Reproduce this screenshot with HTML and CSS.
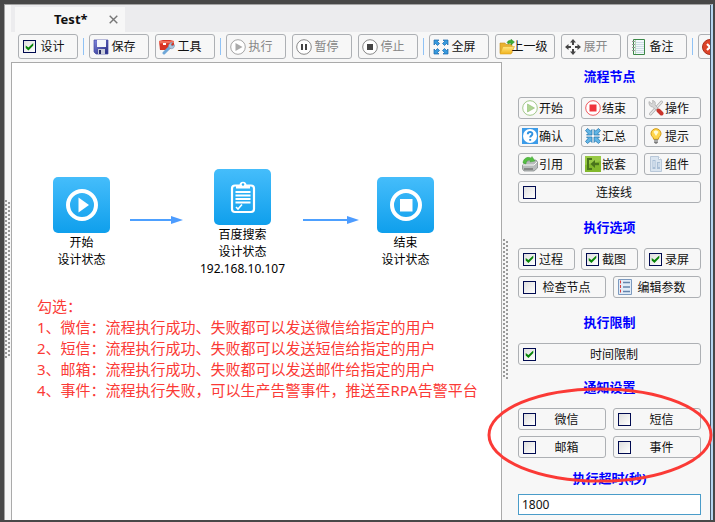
FILE: index.html
```html
<!DOCTYPE html>
<html lang="zh-CN">
<head>
<meta charset="utf-8">
<title>Test*</title>
<link rel="stylesheet" href="styles.css">
</head>
<body>
<svg class="defs" aria-hidden="true">
  <defs>
    <linearGradient id="blue" x1="0" y1="0" x2="0" y2="1"><stop offset="0" stop-color="#45bdfb"/><stop offset="1" stop-color="#0f9fec"/></linearGradient>
    <linearGradient id="disk" x1="0" y1="0" x2="1" y2="1"><stop offset="0" stop-color="#7f86dd"/><stop offset="1" stop-color="#23277f"/></linearGradient>
    <linearGradient id="gold" x1="0" y1="0" x2="0" y2="1"><stop offset="0" stop-color="#ffe882"/><stop offset="1" stop-color="#f2b31c"/></linearGradient>
  </defs>
</svg>
<div class="window">
  <div class="splitter splitter-left"><div class="grip"></div></div>
  <div class="workspace">
    <header class="tabs">
      <div class="tab"><span class="tab-title">Test*</span>
        <button class="tab-close" type="button" aria-label="关闭"><svg viewBox="0 0 9 9" width="9" height="9"><path d="M.7.7l7.6 7.6M8.3.7L.7 8.3" stroke="#777" stroke-width="1.4"/></svg></button>
      </div>
    </header>
    <nav class="toolbar">
      <div class="group">
        <label class="btn"><input type="checkbox" checked><span>设计</span></label>
      </div>
      <i class="sep"></i>
      <div class="group">
        <button class="btn" type="button"><svg class="icon" viewBox="0 0 16 16"><path d="M1 1h14v14H3l-2-2z" fill="url(#disk)" stroke="#4349a4" stroke-width=".7"/><path d="M4 1h9v7H4z" fill="#f4f6fb"/><path d="M5 10h7v5H5z" fill="#c9cdda"/><path d="M6 11h2v4H6z" fill="#272b66"/></svg><span>保存</span></button>
        <button class="btn" type="button"><svg class="icon" viewBox="0 0 16 16"><path d="M0 2l4-1h7l4 1v6l-6 3H1z" fill="#d93424"/><path d="M0 2l15 0v2L.5 4.500z" fill="#f0705c"/><path d="M4 4h3v2H4z" fill="#fff"/><path d="M5 14l6-6" stroke="#6ea7d8" stroke-width="3" stroke-linecap="round"/><path d="M13.500 3.500l-1.500 2 1 1.500 2.500-1.300c.5 2-1 4-3 4l-2-.5-1-2c0-2 2-4 4-3.700z" fill="#a8c6df" stroke="#7190aa" stroke-width=".5"/></svg><span>工具</span></button>
      </div>
      <i class="sep"></i>
      <div class="group">
        <button class="btn" type="button" disabled><svg class="icon" viewBox="0 0 16 16"><circle cx="8" cy="8" r="7.300" fill="#fff" stroke="#a5a5a5"/><path d="M5.500 4l7 4-7 4z" fill="#aaa"/></svg><span>执行</span></button>
        <button class="btn" type="button" disabled><svg class="icon" viewBox="0 0 16 16"><circle cx="8" cy="8" r="7.300" fill="#fff" stroke="#888"/><path d="M5 5h2v6H5zM9 5h2v6H9z" fill="#444"/></svg><span>暂停</span></button>
        <button class="btn" type="button" disabled><svg class="icon" viewBox="0 0 16 16"><circle cx="8" cy="8" r="7.300" fill="#fff" stroke="#888"/><path d="M5 5h6v6H5z" fill="#444"/></svg><span>停止</span></button>
      </div>
      <i class="sep"></i>
      <div class="group">
        <button class="btn" type="button"><svg class="icon" viewBox="0 0 16 16"><path d="M1 1h5L4.500 2.500l2 2-2 2-2-2L1 6zM15 1v5l-1.500-1.500-2 2-2-2 2-2L10 1zM1 15v-5l1.500 1.500 2-2 2 2-2 2L6 15zM15 15h-5l1.500-1.500-2-2 2-2 2 2L15 10z" fill="#369ade" stroke="#1765ab" stroke-width=".7"/></svg><span>全屏</span></button>
        <button class="btn" type="button"><svg class="icon" viewBox="0 0 16 16"><path d="M1 4h5l1 1.500h6V14H1z" fill="#e9b22f" stroke="#c48d1b" stroke-width=".6"/><path d="M4 7.500h11.500L12 15H1z" fill="url(#gold)" stroke="#dba626" stroke-width=".6"/><path d="M8 3.500C9 1.500 11 1 12 1.500V.2L15.500 3 12 6V4.300c-1-.3-2 0-2.700.7z" fill="#3eac35" stroke="#1f7d20" stroke-width=".4"/></svg><span>上一级</span></button>
        <button class="btn" type="button" disabled><svg class="icon" viewBox="0 0 16 16"><path d="M8 0l3 3.500H9V6H7V3.500H5zM8 16l-3-3.500h2V10h2v2.500h2zM0 8l3.500-3v2H6v2H3.500v2zM16 8l-3.500 3V9H10V7h2.500V5z" fill="#444"/></svg><span>展开</span></button>
        <button class="btn" type="button"><svg class="icon" viewBox="0 0 16 16"><path d="M2.500.5h11v15h-11z" fill="#f3f8fb" stroke="#3a8746"/><path d="M5 3.500h8M5 5.500h8M5 7.500h8M5 9.500h8M5 11.500h8M5 13.500h8" stroke="#c3d5de" stroke-width=".8"/><path d="M4.500 1v14" stroke="#b7d9ba"/><path d="M1 2.500h3M1 5.500h3M1 8.500h3M1 11.500h3" stroke="#999"/></svg><span>备注</span></button>
      </div>
      <i class="sep"></i>
      <div class="group">
        <button class="btn" type="button" aria-label="关闭流程"><svg class="icon" viewBox="0 0 16 16"><circle cx="8" cy="8" r="7.500" fill="#dc4328" stroke="#a92f1c"/><path d="M5 5l6 6M11 5l-6 6" stroke="#fff" stroke-width="2.200"/></svg></button>
      </div>
    </nav>
    <div class="content">
      <main class="canvas">
        <div class="node node-start">
          <svg class="tile" viewBox="0 0 57 56"><rect width="57" height="56" rx="5" fill="url(#blue)"/><circle cx="29" cy="28" r="14" fill="none" stroke="#fff" stroke-width="4"/><path d="M25.500 20.500v15L36 28z" fill="#fff"/></svg>
          <p>开始</p><p>设计状态</p>
        </div>
        <svg class="arrow arrow-one" viewBox="0 0 54 8"><path d="M0 4h44" stroke="#4da0ff" stroke-width="2"/><path d="M41 0l12 4-12 4z" fill="#4d9cff"/></svg>
        <div class="node node-search">
          <svg class="tile" viewBox="0 0 57 56"><rect width="57" height="56" rx="5" fill="url(#blue)"/><rect x="18" y="16.500" width="22" height="26.500" rx="3" fill="none" stroke="#fff" stroke-width="2.200"/><path d="M22 19.500v-3.300h3.500a3.500 3.500 0 0 1 7 0H36v3.300z" fill="#fff"/><circle cx="29" cy="15.500" r="1.200" fill="#27adf3"/><path d="M21.500 23h15M21.500 26.500h15M21.500 30h15M21.500 33.500h15" stroke="#fff" stroke-width="1.800"/><path d="M22 38l2 2 4-4.500" fill="none" stroke="#fff" stroke-width="1.600"/></svg>
          <p>百度搜索</p><p>设计状态</p><p>192.168.10.107</p>
        </div>
        <svg class="arrow arrow-two" viewBox="0 0 57 8"><path d="M0 4h47" stroke="#4da0ff" stroke-width="2"/><path d="M44 0l12 4-12 4z" fill="#4d9cff"/></svg>
        <div class="node node-end">
          <svg class="tile" viewBox="0 0 57 56"><rect width="57" height="56" rx="5" fill="url(#blue)"/><circle cx="29" cy="28" r="14" fill="none" stroke="#fff" stroke-width="4"/><path d="M23 22h12.500v12.500H23z" fill="#fff"/></svg>
          <p>结束</p><p>设计状态</p>
        </div>
        <div class="note">
          <p>勾选：</p>
          <p>1、微信：流程执行成功、失败都可以发送微信给指定的用户</p>
          <p>2、短信：流程执行成功、失败都可以发送短信给指定的用户</p>
          <p>3、邮箱：流程执行成功、失败都可以发送邮件给指定的用户</p>
          <p>4、事件：流程执行失败，可以生产告警事件，推送至RPA告警平台</p>
        </div>
      </main>
      <div class="splitter splitter-right"><div class="grip"></div></div>
      <aside class="panel">
        <section>
          <h2>流程节点</h2>
          <div class="thirds">
            <button class="btn" type="button"><svg class="icon" viewBox="0 0 16 16"><circle cx="8" cy="8" r="7.300" fill="#fff" stroke="#a2c98b"/><path d="M5.500 4l7 4-7 4z" fill="#aed492" stroke="#8fbe70" stroke-width=".6"/></svg><span>开始</span></button>
            <button class="btn" type="button"><svg class="icon" viewBox="0 0 16 16"><circle cx="8" cy="8" r="7.300" fill="#fff" stroke="#f05a60"/><path d="M4.500 4.500h7v7h-7z" fill="#f0343c"/></svg><span>结束</span></button>
            <button class="btn" type="button"><svg class="icon" viewBox="0 0 16 16"><path d="M13.500 2L2.500 14" stroke="#aaa" stroke-width="2.800" stroke-linecap="round"/><path d="M13.500 2L2.500 14" stroke="#e6e6e6" stroke-width="1.600" stroke-linecap="round"/><path d="M1 1.500l2.500 2 1.500-1L4.500.5C7 .5 8 3 7 5l3 3-2 2-3.500-3C2 7 .5 4 1 1.500z" fill="#d5d5d5" stroke="#a2a2a2" stroke-width=".6"/><path d="M10.500 10.500l3 3" stroke="#c9342b" stroke-width="4" stroke-linecap="round"/></svg><span>操作</span></button>
            <button class="btn" type="button"><svg class="icon" viewBox="0 0 16 16"><path d="M0 0h16v16H0z" fill="#3b9be8"/><circle cx="8" cy="8" r="7" fill="#fff"/><path d="M5.800 6.300c0-3 4.600-2.900 4.600-.2 0 1.600-2.200 1.500-2.200 3.400M8.200 11v1.700" fill="none" stroke="#2f91df" stroke-width="1.900"/></svg><span>确认</span></button>
            <button class="btn" type="button"><svg class="icon" viewBox="0 0 16 16"><path d="M7 7H1.500L3 5.500l-2.500-3 2-2 3 2.500L7 1.500zM9 7V1.500L10.500 3l3-2.500 2 2-2.500 3L14.500 7zM7 9v5.500L5.500 13l-3 2.500-2-2L3 10.500 1.500 9zM9 9h5.500L13 10.500l2.500 3-2 2-3-2.500L9 14.500z" fill="#62b5e5" stroke="#1b6fa9" stroke-width=".7"/></svg><span>汇总</span></button>
            <button class="btn" type="button"><svg class="icon" viewBox="0 0 16 16"><path d="M8 .7a5 5 0 0 0-5 5c0 2.600 2.500 3.200 2.700 5.600h4.600C10.500 8.900 13 8.300 13 5.700a5 5 0 0 0-5-5z" fill="#ffd64b" stroke="#d39a14"/><path d="M5.500 4c1-2 3.500-2 5 0L8 8z" fill="#fffbd9"/><path d="M6 11.500h4v3L8.500 15.700h-1L6 14.500z" fill="#777"/><path d="M6 13h4" stroke="#ddd"/></svg><span>提示</span></button>
            <button class="btn" type="button"><svg class="icon" viewBox="0 0 16 16"><path d="M5 5l9-1 1.500 2v6L12 15H2L.5 13V9z" fill="#b8bcbc" stroke="#7c8282" stroke-width=".7"/><path d="M.8 9H12l3-3" stroke="#f8f8f8" fill="none"/><path d="M2 13h9" stroke="#555"/><path d="M1 7c0-4 4-7 8-5l1-1.500L13 5l-5 1 .8-1.500C6 3.500 4 5 4 8z" fill="#55bd42" stroke="#389a2d" stroke-width=".4"/></svg><span>引用</span></button>
            <button class="btn" type="button"><svg class="icon" viewBox="0 0 16 16"><path d="M0 0h16v16H0z" fill="#82b82c"/><path d="M0 0h16v5L0 9z" fill="#98c946"/><path d="M7 3H3v10h4" fill="none" stroke="#4a741c" stroke-width="2"/><path d="M14 8H8" stroke="#4a741c" stroke-width="2.400"/><path d="M10 4v8L5.500 8z" fill="#4a741c"/></svg><span>嵌套</span></button>
            <button class="btn" type="button"><svg class="icon" viewBox="0 0 16 16"><path d="M2.500.5h8l3 3v12h-11z" fill="#dae5f0" stroke="#b9c8d9"/><path d="M10.500.5v3h3" fill="#fff" stroke="#b9c8d9"/><path d="M4.500 4h3v9h-3zM9 6h3v7H9z" fill="#a9bfd6"/><path d="M5 6h2M5 8h2M5 10h2M10 8h2M10 10h2" stroke="#eef4fa"/></svg><span>组件</span></button>
          </div>
          <label class="btn"><input type="checkbox"><span>连接线</span></label>
        </section>
        <section>
          <h2>执行选项</h2>
          <div class="thirds">
            <label class="btn"><input type="checkbox" checked><span>过程</span></label>
            <label class="btn"><input type="checkbox" checked><span>截图</span></label>
            <label class="btn"><input type="checkbox" checked><span>录屏</span></label>
          </div>
          <div class="halves">
            <label class="btn"><input type="checkbox"><span>检查节点</span></label>
            <button class="btn" type="button"><svg class="icon" viewBox="0 0 16 16"><path d="M1.500.5h13v15h-13z" fill="#e1ecf8" stroke="#7c9abf"/><path d="M6 3.500h7M6 8h7M6 12.500h7" stroke="#6485ad" stroke-width="1.300"/><path d="M3.500 1.500v13" stroke="#d63e3e" stroke-dasharray="3 1.500"/></svg><span>编辑参数</span></button>
          </div>
        </section>
        <section>
          <h2>执行限制</h2>
          <label class="btn"><input type="checkbox" checked><span>时间限制</span></label>
        </section>
        <section class="notify">
          <h2>通知设置</h2>
          <div class="halves">
            <label class="btn"><input type="checkbox"><span>微信</span></label>
            <label class="btn"><input type="checkbox"><span>短信</span></label>
            <label class="btn"><input type="checkbox"><span>邮箱</span></label>
            <label class="btn"><input type="checkbox"><span>事件</span></label>
          </div>
          <svg class="highlight" viewBox="0 0 226 96" aria-hidden="true"><ellipse cx="113" cy="48" rx="111" ry="46" fill="none" stroke="#fb3a36" stroke-width="3"/></svg>
        </section>
        <section class="timeout">
          <h2><label for="timeout">执行超时(秒)</label></h2>
          <input class="field" id="timeout" type="text" value="1800">
        </section>
      </aside>
    </div>
  </div>
</div>
</body>
</html>
```

FILE: styles.css
```css
* {
  box-sizing: border-box;
}

body {
  margin: 0;
  min-height: 100vh;
  display: flex;
  padding: 4px 2px 2px 4px;
  background: #484848;
  font: 12px/17px "Noto Sans", "Noto Sans CJK SC", sans-serif;
  color: #111;
}

p, h2 {
  margin: 0;
}

.defs {
  position: absolute;
  width: 0;
  height: 0;
}

.window {
  flex: 1;
  min-width: 0;
  display: flex;
  background: #f7f7f7;
  border-top: 1px solid #a3a3a3;
  border-left: 1px solid #a3a3a3;
  border-right: 2px solid #b5d5ef;
}

.workspace {
  flex: 1;
  min-width: 0;
  display: flex;
  flex-direction: column;
  border-right: 1px solid #46586a;
}

/* Drag handles */
.splitter {
  flex: none;
}

.splitter-left {
  width: 6px;
  padding-top: 195px;
}

.splitter-right {
  width: 7px;
  padding: 177px 0 0 1px;
}

.grip {
  width: 5px;
  height: 140px;
  background:
    linear-gradient(#999 2px, transparent 2px) 0 0 / 2px 4px repeat-y,
    linear-gradient(transparent 2px, #999 2px) 3px 0 / 2px 4px repeat-y;
}

.splitter-left .grip {
  height: 158px;
}

/* Tabs */
.tabs {
  display: flex;
  height: 27px;
  padding: 2px 0 0 4px;
  background: #ececee;
}

.tab {
  display: flex;
  align-items: center;
  justify-content: space-between;
  width: 110px;
  padding: 0 7px 0 39px;
  background: #f7f7f7;
}

.tab-title {
  font-size: 13px;
  font-weight: 700;
}

.tab-close {
  display: flex;
  padding: 0;
  border: 0;
  background: none;
}

/* Toolbar */
.toolbar {
  display: flex;
  align-items: center;
  gap: 5px;
  height: 30px;
  padding: 0 0 1px 7px;
  overflow: hidden;
}

.group {
  display: flex;
  flex: none;
  gap: 6px;
}

.sep {
  flex: none;
  width: 1px;
  height: 17px;
  background: #90c2f5;
}

/* Buttons: icon at the left edge, caption centred over the rest */
.btn {
  display: grid;
  grid-template-columns: 1fr;
  align-items: center;
  height: 22px;
  padding: 0 3px;
  border: 1px solid #adb0b4;
  border-radius: 3px;
  background: #f7f7f7;
  font: inherit;
  color: #111;
}

.btn > * {
  grid-area: 1 / 1;
}

.btn span {
  justify-self: center;
  padding-left: 9px;
  white-space: nowrap;
}

.btn:disabled {
  color: #868686;
}

.toolbar .btn {
  width: 60px;
  height: 25px;
}

.icon {
  width: 16px;
  height: 16px;
}

.btn input {
  appearance: none;
  display: grid;
  place-items: center;
  width: 13px;
  height: 13px;
  margin: 0 0 0 1px;
  border: 1px solid #000a50;
  background: linear-gradient(135deg, #dedede, #fff);
}

.btn input:checked::before {
  content: "";
  width: 9px;
  height: 8px;
  background: #078407;
  clip-path: polygon(8% 38%, 38% 62%, 92% 5%, 92% 38%, 38% 100%, 8% 68%);
}

/* Flow canvas */
.content {
  flex: 1;
  display: flex;
}

.canvas {
  position: relative;
  flex: 1;
  min-width: 0;
  background: #fff;
  border: 1px solid #aaa;
  border-bottom: 0;
  color: #000;
}

.node {
  position: absolute;
  width: 95px;
  text-align: center;
}

.tile {
  display: block;
  width: 57px;
  height: 56px;
  margin: 0 auto 1px;
}

.node-start {
  left: 22px;
  top: 114px;
}

.node-search {
  left: 183px;
  top: 106px;
}

.node-end {
  left: 346px;
  top: 114px;
}

.arrow {
  position: absolute;
  top: 153px;
  height: 8px;
}

.arrow-one {
  left: 118px;
  width: 54px;
}

.arrow-two {
  left: 291px;
  width: 57px;
}

.note {
  position: absolute;
  left: 25px;
  top: 233px;
  font-size: 15px;
  line-height: 21px;
  white-space: nowrap;
  color: #fb3a36;
}

/* Settings panel */
.panel {
  flex: none;
  width: 201px;
  padding: 4px 9px;
  display: flex;
  flex-direction: column;
  gap: 14px;
}

.panel section {
  display: flex;
  flex-direction: column;
  gap: 6px;
}

.panel h2 {
  margin-bottom: 5px;
  font-size: 13px;
  line-height: 20px;
  font-weight: 700;
  text-align: center;
  color: #00f;
}

.thirds {
  display: grid;
  grid-template-columns: repeat(3, 1fr);
  gap: 6px;
}

.halves {
  display: grid;
  grid-template-columns: repeat(2, 1fr);
  gap: 6px 7px;
}

.notify {
  position: relative;
}

.panel .notify {
  margin-top: -2px;
}

.highlight {
  position: absolute;
  left: -31px;
  top: 10px;
  width: 226px;
  height: 96px;
  pointer-events: none;
}

.panel .timeout {
  margin-top: -4px;
  gap: 1px;
}

.field {
  width: 100%;
  height: 21px;
  padding: 0 3px;
  border: 1px solid #4a9cc9;
  background: #fff;
  font: inherit;
  color: #111;
}
```
